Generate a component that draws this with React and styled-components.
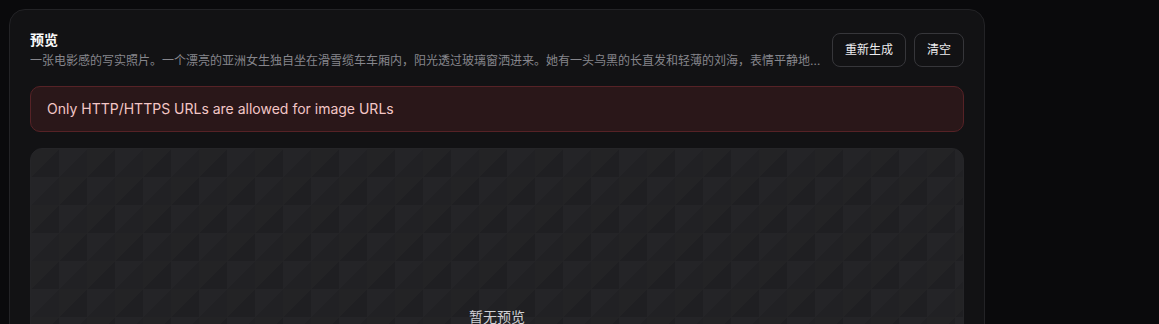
import React from "react";
import styled, { createGlobalStyle } from "styled-components";

const GlobalStyle = createGlobalStyle`
  *, *::before, *::after { box-sizing: border-box; }
  html, body {
    margin: 0;
    padding: 0;
    background: #0a0a0c;
    font-family: Inter, "Noto Sans CJK SC", "Noto Sans", sans-serif;
    color: #f4f4f5;
    -webkit-font-smoothing: antialiased;
  }
`;

const Page = styled.div`
  padding: 9px;
  min-height: 100vh;
  background: #0a0a0c;
`;

const Panel = styled.section`
  width: 976px;
  background: #121214;
  border: 1px solid #232326;
  border-radius: 16px;
  padding: 20px;
  display: flex;
  flex-direction: column;
  gap: 16px;
`;

const Header = styled.div`
  display: flex;
  align-items: center;
  gap: 2px;
`;

const HeaderText = styled.div`
  flex: 1;
  min-width: 0;
  display: flex;
  flex-direction: column;
  gap: 2px;
`;

const Title = styled.h2`
  margin: 0;
  font-size: 14px;
  line-height: 20px;
  font-weight: 700;
  color: #fafafa;
`;

const Description = styled.p`
  margin: 0;
  font-size: 12px;
  line-height: 18px;
  color: #86868c;
  white-space: nowrap;
  overflow: hidden;
  text-overflow: ellipsis;
`;

const Actions = styled.div`
  display: flex;
  gap: 8px;
  flex-shrink: 0;
`;

const Button = styled.button`
  height: 34px;
  padding: 0 12px;
  background: transparent;
  border: 1px solid #36363a;
  border-radius: 8px;
  color: #ececef;
  font-family: inherit;
  font-size: 12px;
  line-height: 1;
  cursor: pointer;
`;

const ErrorBox = styled.div`
  padding: 12px 16px;
  background: #2a1719;
  border: 1px solid #562226;
  border-radius: 10px;
  color: #f3c6c6;
  font-size: 14px;
  line-height: 20px;
`;

const Preview = styled.div`
  height: 336px;
  border-radius: 12px;
  border: 1px solid #252528;
  background-color: #1f1f22;
  background-image:
    linear-gradient(-45deg, transparent 50%, rgba(255, 255, 255, 0.016) 50%),
    repeating-conic-gradient(rgba(255, 255, 255, 0.006) 0 25%, transparent 0 50%);
  background-size: 28px 28px, 56px 56px;
  display: flex;
  align-items: center;
  justify-content: center;
`;

const Empty = styled.span`
  font-size: 14px;
  color: #cfcfd3;
`;

export default function App() {
  return (
    <>
      <GlobalStyle />
      <Page>
        <Panel>
          <Header>
            <HeaderText>
              <Title>预览</Title>
              <Description>
                一张电影感的写实照片。一个漂亮的亚洲女生独自坐在滑雪缆车车厢内，阳光透过玻璃窗洒进来。她有一头乌黑的长直发和轻薄的刘海，表情平静地望向窗外，远处是连绵的雪山。
              </Description>
            </HeaderText>
            <Actions>
              <Button>重新生成</Button>
              <Button>清空</Button>
            </Actions>
          </Header>
          <ErrorBox>Only HTTP/HTTPS URLs are allowed for image URLs</ErrorBox>
          <Preview>
            <Empty>暂无预览</Empty>
          </Preview>
        </Panel>
      </Page>
    </>
  );
}
